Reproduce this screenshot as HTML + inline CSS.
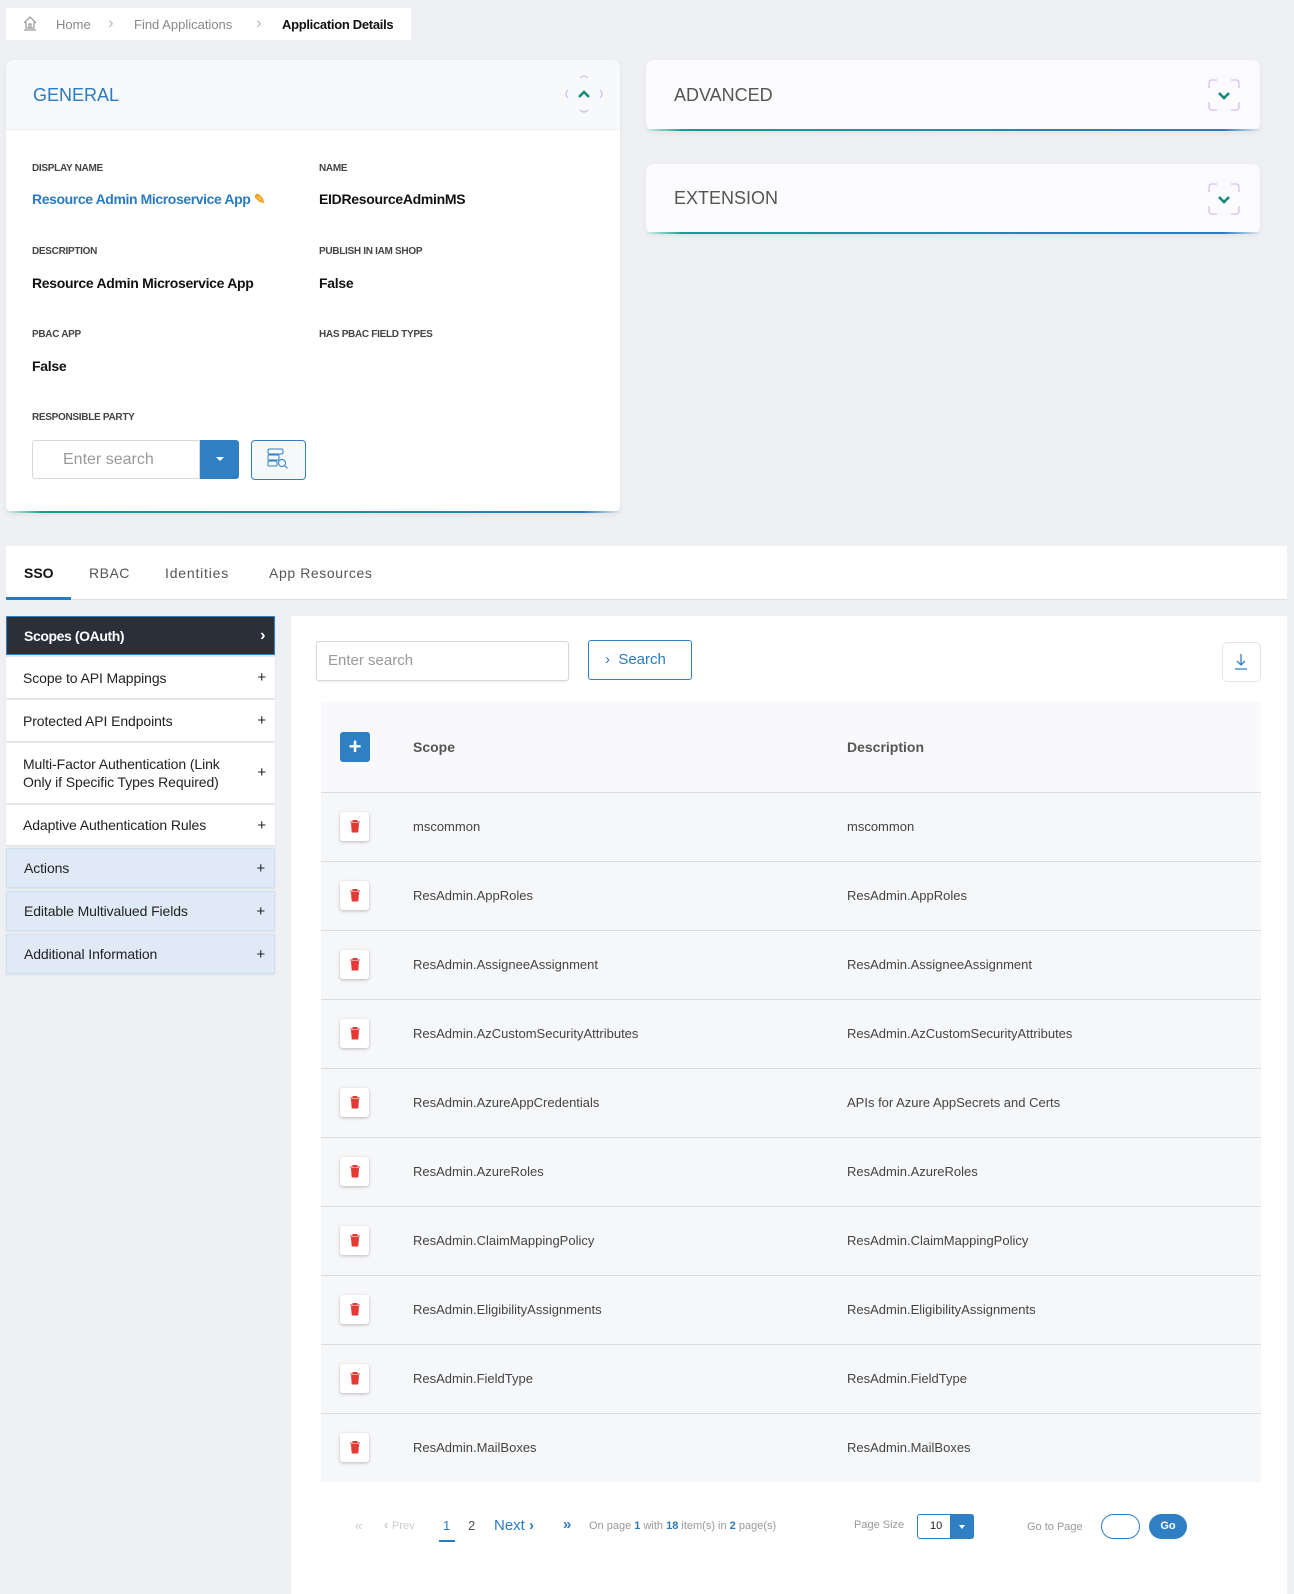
<!DOCTYPE html>
<html><head><meta charset="utf-8"><style>
*{box-sizing:border-box;margin:0;padding:0}
body{width:1294px;height:1594px;background:#eef0f3;font-family:"Liberation Sans",sans-serif;position:relative;overflow:hidden;color:#222}
.a{position:absolute}
.lbl{font-size:10px;font-weight:bold;color:#444;letter-spacing:-0.3px}
.val{font-size:14px;font-weight:bold;color:#111;letter-spacing:-0.3px}
.card{background:#fbfbfd;border-radius:8px;box-shadow:0 2px 6px rgba(0,0,0,.06)}
.grad{height:2px;background:linear-gradient(90deg,#d8f0ea,#12a08f 6%,#2a7bc0 94%,#e0e8f0)}
.menu{position:absolute;left:6px;width:269px;background:#fff;font-size:14px;color:#222;padding-left:17px;display:flex;align-items:center;box-shadow:0 1px 2px rgba(0,0,0,.08);letter-spacing:-0.1px}
.menu .p{position:absolute;right:9px;font-size:15px}
.blue{background:#dfeaf6;border:1px solid #cfe0f2}
.row{position:absolute;left:321px;width:940px;height:69px;background:#f6f7f9;border-top:1px solid #dcdcdc;font-size:13px;color:#444}
.row span{position:absolute;top:26px}
.del{position:absolute;left:19px;top:19px;width:29px;height:29px;background:#fff;border-radius:3px;box-shadow:0 1px 3px rgba(0,0,0,.25)}
</style></head><body>
<div class="a" style="left:6px;top:8px;width:405px;height:32px;background:#fff"></div>
<svg class="a" style="left:22px;top:15px" width="16" height="16" viewBox="0 0 16 16" fill="none" stroke="#999" stroke-width="1.2"><path d="M2 8L8 2l6 6M4 7v6h8V7M7 13V9h2v4M2 15h12"/></svg>
<div class="a" style="left:56px;top:17px;font-size:13px;color:#888">Home</div>
<div class="a" style="left:108px;top:13px;font-size:17px;color:#bbb">&#8250;</div>
<div class="a" style="left:134px;top:17px;font-size:13px;color:#888">Find Applications</div>
<div class="a" style="left:256px;top:13px;font-size:17px;color:#bbb">&#8250;</div>
<div class="a" style="left:282px;top:17px;font-size:13px;color:#111;font-weight:bold;letter-spacing:-0.3px">Application Details</div>

<div class="a card" style="left:6px;top:60px;width:614px;height:453px;background:#fff">
  <div style="height:70px;background:#f8f9fb;border-radius:8px 8px 0 0;border-bottom:1px solid #eceef2"></div>
  <div class="a grad" style="left:0;right:0;bottom:0"></div>
</div>
<div class="a" style="left:33px;top:85px;font-size:18px;color:#2a7bc0">GENERAL</div>
<svg class="a" style="left:562px;top:72px" width="44" height="44" viewBox="0 0 44 44" fill="none"><path d="M18 6q4-4 8 0M18 38q4 4 8 0M6 18q-4 4 0 8M38 18q4 4 0 8" stroke="#c8b6f0" stroke-width="1"/><path d="M17 25l5-5 5 5" stroke="#138a7c" stroke-width="2.5"/></svg>
<div class="a lbl" style="left:32px;top:163px">DISPLAY NAME</div>
<div class="a lbl" style="left:319px;top:163px">NAME</div>
<div class="a" style="left:32px;top:191px;font-size:14px;font-weight:bold;color:#2a7bc0;letter-spacing:-0.4px">Resource Admin Microservice App <span style="color:#f0a020">&#9998;</span></div>
<div class="a val" style="left:319px;top:191px">EIDResourceAdminMS</div>
<div class="a lbl" style="left:32px;top:246px">DESCRIPTION</div>
<div class="a lbl" style="left:319px;top:246px">PUBLISH IN IAM SHOP</div>
<div class="a val" style="left:32px;top:275px">Resource Admin Microservice App</div>
<div class="a val" style="left:319px;top:275px">False</div>
<div class="a lbl" style="left:32px;top:329px">PBAC APP</div>
<div class="a lbl" style="left:319px;top:329px">HAS PBAC FIELD TYPES</div>
<div class="a val" style="left:32px;top:358px">False</div>
<div class="a lbl" style="left:32px;top:412px">RESPONSIBLE PARTY</div>
<div class="a" style="left:32px;top:440px;width:168px;height:39px;border:1px solid #d5d8dd;border-radius:3px 0 0 3px;background:#fff;font-size:16px;color:#999;padding:10px 0 0 30px">Enter search</div>
<div class="a" style="left:200px;top:440px;width:39px;height:39px;background:#2f7fc4;border-radius:0 3px 3px 0"><div style="margin:17px auto;width:0;height:0;border:4px solid transparent;border-top:4px solid #fff;border-bottom:0"></div></div>
<div class="a" style="left:251px;top:440px;width:55px;height:40px;border:1px solid #2f7fc4;border-radius:4px;background:#f6f9fc"></div>
<svg class="a" style="left:266px;top:447px" width="24" height="24" viewBox="0 0 24 24" fill="none" stroke="#2f7fc4" stroke-width="1"><rect x="2" y="2" width="15" height="5" rx="1.5"/><rect x="2" y="8" width="11" height="5" rx="1"/><rect x="2" y="14" width="9" height="5" rx="1"/><circle cx="16" cy="16" r="3.5"/><path d="M18.5 18.5l3 3"/></svg>

<div class="a card" style="left:646px;top:60px;width:614px;height:71px"><div class="a grad" style="left:0;right:0;bottom:0"></div></div>
<div class="a" style="left:674px;top:85px;font-size:18px;color:#555">ADVANCED</div>
<div class="a card" style="left:646px;top:164px;width:614px;height:70px"><div class="a grad" style="left:0;right:0;bottom:0"></div></div>
<div class="a" style="left:674px;top:188px;font-size:18px;color:#555">EXTENSION</div>
<svg class="a" style="left:1207px;top:78px" width="34" height="34" viewBox="0 0 34 34" fill="none"><path d="M2 10V5q0-3 3-3h5M24 2h5q3 0 3 3v5M32 24v5q0 3-3 3h-5M10 32H5q-3 0-3-3v-5" stroke="#d4c2f2" stroke-width="1.3"/><path d="M12 15l5 5 5-5" stroke="#138a7c" stroke-width="2.6"/></svg>
<svg class="a" style="left:1207px;top:182px" width="34" height="34" viewBox="0 0 34 34" fill="none"><path d="M2 10V5q0-3 3-3h5M24 2h5q3 0 3 3v5M32 24v5q0 3-3 3h-5M10 32H5q-3 0-3-3v-5" stroke="#d4c2f2" stroke-width="1.3"/><path d="M12 15l5 5 5-5" stroke="#138a7c" stroke-width="2.6"/></svg>

<div class="a" style="left:6px;top:546px;width:1281px;height:54px;background:#fff;border-bottom:1px solid #dcdee2"></div>
<div class="a" style="left:6px;top:597px;width:65px;height:3px;background:#2a7bc0"></div>
<div class="a" style="left:24px;top:565px;font-size:14px;font-weight:bold;color:#111">SSO</div>
<div class="a" style="left:89px;top:565px;font-size:14px;color:#555;letter-spacing:.5px">RBAC</div>
<div class="a" style="left:165px;top:565px;font-size:14px;color:#555;letter-spacing:.8px">Identities</div>
<div class="a" style="left:269px;top:565px;font-size:14px;color:#555;letter-spacing:.6px">App Resources</div>

<div class="menu" style="top:616px;height:39px;background:#2a2f3a;color:#fff;font-weight:bold;border:1px solid #2f7fc4;letter-spacing:-0.4px">Scopes (OAuth)<span class="p" style="font-size:16px">&#8250;</span></div>
<div class="menu" style="top:657px;height:41px">Scope to API Mappings<span class="p">+</span></div>
<div class="menu" style="top:700px;height:41px">Protected API Endpoints<span class="p">+</span></div>
<div class="menu" style="top:743px;height:60px;line-height:18px">Multi-Factor Authentication (Link<br>Only if Specific Types Required)<span class="p">+</span></div>
<div class="menu" style="top:805px;height:40px">Adaptive Authentication Rules<span class="p">+</span></div>
<div class="menu blue" style="top:848px;height:40px">Actions<span class="p">+</span></div>
<div class="menu blue" style="top:891px;height:40px">Editable Multivalued Fields<span class="p">+</span></div>
<div class="menu blue" style="top:934px;height:40px">Additional Information<span class="p">+</span></div>

<div class="a" style="left:291px;top:616px;width:996px;height:978px;background:#fff"></div>
<div class="a" style="left:316px;top:641px;width:253px;height:40px;border:1px solid #d5d8dd;border-radius:3px;font-size:15px;color:#999;padding:10px 0 0 11px;box-shadow:0 1px 2px rgba(0,0,0,.08)">Enter search</div>
<div class="a" style="left:588px;top:640px;width:104px;height:40px;border:1px solid #2f7fc4;border-radius:3px;font-size:15px;color:#2a7bc0;padding:10px 0 0 16px">&#8250;&nbsp; Search</div>
<div class="a" style="left:1222px;top:642px;width:39px;height:40px;border:1px solid #e4e6ea;border-radius:5px"></div>
<svg class="a" style="left:1233px;top:653px" width="16" height="18" viewBox="0 0 16 18" fill="none" stroke="#2f7fc4" stroke-width="1.3"><path d="M8 1v11M4 8l4 4 4-4M2 16h12"/></svg>

<div class="a" style="left:321px;top:702px;width:940px;height:90px;background:#f9f9fb"></div>
<div class="a" style="left:340px;top:732px;width:30px;height:30px;background:#2f7fc4;border-radius:3px;color:#fff;font-size:22px;font-weight:bold;text-align:center;line-height:29px">+</div>
<div class="a" style="left:413px;top:739px;font-size:14px;font-weight:bold;color:#555">Scope</div>
<div class="a" style="left:847px;top:739px;font-size:14px;font-weight:bold;color:#555">Description</div>

<div class="row" style="top:792px"><div class="del"></div><span style="left:92px">mscommon</span><span style="left:526px">mscommon</span></div>
<div class="row" style="top:861px"><div class="del"></div><span style="left:92px">ResAdmin.AppRoles</span><span style="left:526px">ResAdmin.AppRoles</span></div>
<div class="row" style="top:930px"><div class="del"></div><span style="left:92px">ResAdmin.AssigneeAssignment</span><span style="left:526px">ResAdmin.AssigneeAssignment</span></div>
<div class="row" style="top:999px"><div class="del"></div><span style="left:92px">ResAdmin.AzCustomSecurityAttributes</span><span style="left:526px">ResAdmin.AzCustomSecurityAttributes</span></div>
<div class="row" style="top:1068px"><div class="del"></div><span style="left:92px">ResAdmin.AzureAppCredentials</span><span style="left:526px">APIs for Azure AppSecrets and Certs</span></div>
<div class="row" style="top:1137px"><div class="del"></div><span style="left:92px">ResAdmin.AzureRoles</span><span style="left:526px">ResAdmin.AzureRoles</span></div>
<div class="row" style="top:1206px"><div class="del"></div><span style="left:92px">ResAdmin.ClaimMappingPolicy</span><span style="left:526px">ResAdmin.ClaimMappingPolicy</span></div>
<div class="row" style="top:1275px"><div class="del"></div><span style="left:92px">ResAdmin.EligibilityAssignments</span><span style="left:526px">ResAdmin.EligibilityAssignments</span></div>
<div class="row" style="top:1344px"><div class="del"></div><span style="left:92px">ResAdmin.FieldType</span><span style="left:526px">ResAdmin.FieldType</span></div>
<div class="row" style="top:1413px;height:69px"><div class="del"></div><span style="left:92px">ResAdmin.MailBoxes</span><span style="left:526px">ResAdmin.MailBoxes</span></div>

<svg width="0" height="0" style="position:absolute"><defs><g id="t"><path d="M3 4h10M6 4V2.5h4V4M4.5 5.5l.7 8.5h5.6l.7-8.5z" fill="#e53935" stroke="#e53935" stroke-width="1"/></g></defs></svg>
<svg class="a" style="left:347px;top:818px" width="16" height="16"><use href="#t"/></svg>
<svg class="a" style="left:347px;top:887px" width="16" height="16"><use href="#t"/></svg>
<svg class="a" style="left:347px;top:956px" width="16" height="16"><use href="#t"/></svg>
<svg class="a" style="left:347px;top:1025px" width="16" height="16"><use href="#t"/></svg>
<svg class="a" style="left:347px;top:1094px" width="16" height="16"><use href="#t"/></svg>
<svg class="a" style="left:347px;top:1163px" width="16" height="16"><use href="#t"/></svg>
<svg class="a" style="left:347px;top:1232px" width="16" height="16"><use href="#t"/></svg>
<svg class="a" style="left:347px;top:1301px" width="16" height="16"><use href="#t"/></svg>
<svg class="a" style="left:347px;top:1370px" width="16" height="16"><use href="#t"/></svg>
<svg class="a" style="left:347px;top:1439px" width="16" height="16"><use href="#t"/></svg>

<div class="a" style="left:355px;top:1518px;font-size:13px;color:#ccc">&laquo;</div>
<div class="a" style="left:384px;top:1517px;font-size:13px;color:#ccc"><b>&lsaquo;</b> <span style="font-size:11px">Prev</span></div>
<div class="a" style="left:443px;top:1518px;font-size:13px;color:#2a7bc0">1</div>
<div class="a" style="left:439px;top:1540px;width:16px;height:2px;background:#2a7bc0"></div>
<div class="a" style="left:468px;top:1518px;font-size:13px;color:#555">2</div>
<div class="a" style="left:494px;top:1517px;font-size:15px;color:#2a7bc0">Next <b>&rsaquo;</b></div>
<div class="a" style="left:563px;top:1516px;font-size:15px;color:#2a7bc0;font-weight:bold">&raquo;</div>
<div class="a" style="left:589px;top:1520px;font-size:11px;color:#999">On page <b style="color:#2a7bc0">1</b> with <b style="color:#2a7bc0">18</b> item(s) in <b style="color:#2a7bc0">2</b> page(s)</div>
<div class="a" style="left:854px;top:1519px;font-size:11px;color:#999">Page Size</div>
<div class="a" style="left:917px;top:1514px;width:57px;height:25px;border:1px solid #2f7fc4;border-radius:3px;background:#fff;font-size:11px;padding:5px 0 0 12px">10</div>
<div class="a" style="left:950px;top:1514px;width:24px;height:25px;background:#2f7fc4;border-radius:0 3px 3px 0"><div style="margin:11px auto;width:0;height:0;border:3px solid transparent;border-top:4px solid #fff;border-bottom:0"></div></div>
<div class="a" style="left:1027px;top:1521px;font-size:11px;color:#999">Go to Page</div>
<div class="a" style="left:1101px;top:1514px;width:39px;height:25px;border:1px solid #2f7fc4;border-radius:13px;background:#fff"></div>
<div class="a" style="left:1149px;top:1514px;width:38px;height:25px;background:#2f7fc4;border-radius:13px;color:#fff;font-size:11px;font-weight:bold;text-align:center;line-height:25px">Go</div>
</body></html>
